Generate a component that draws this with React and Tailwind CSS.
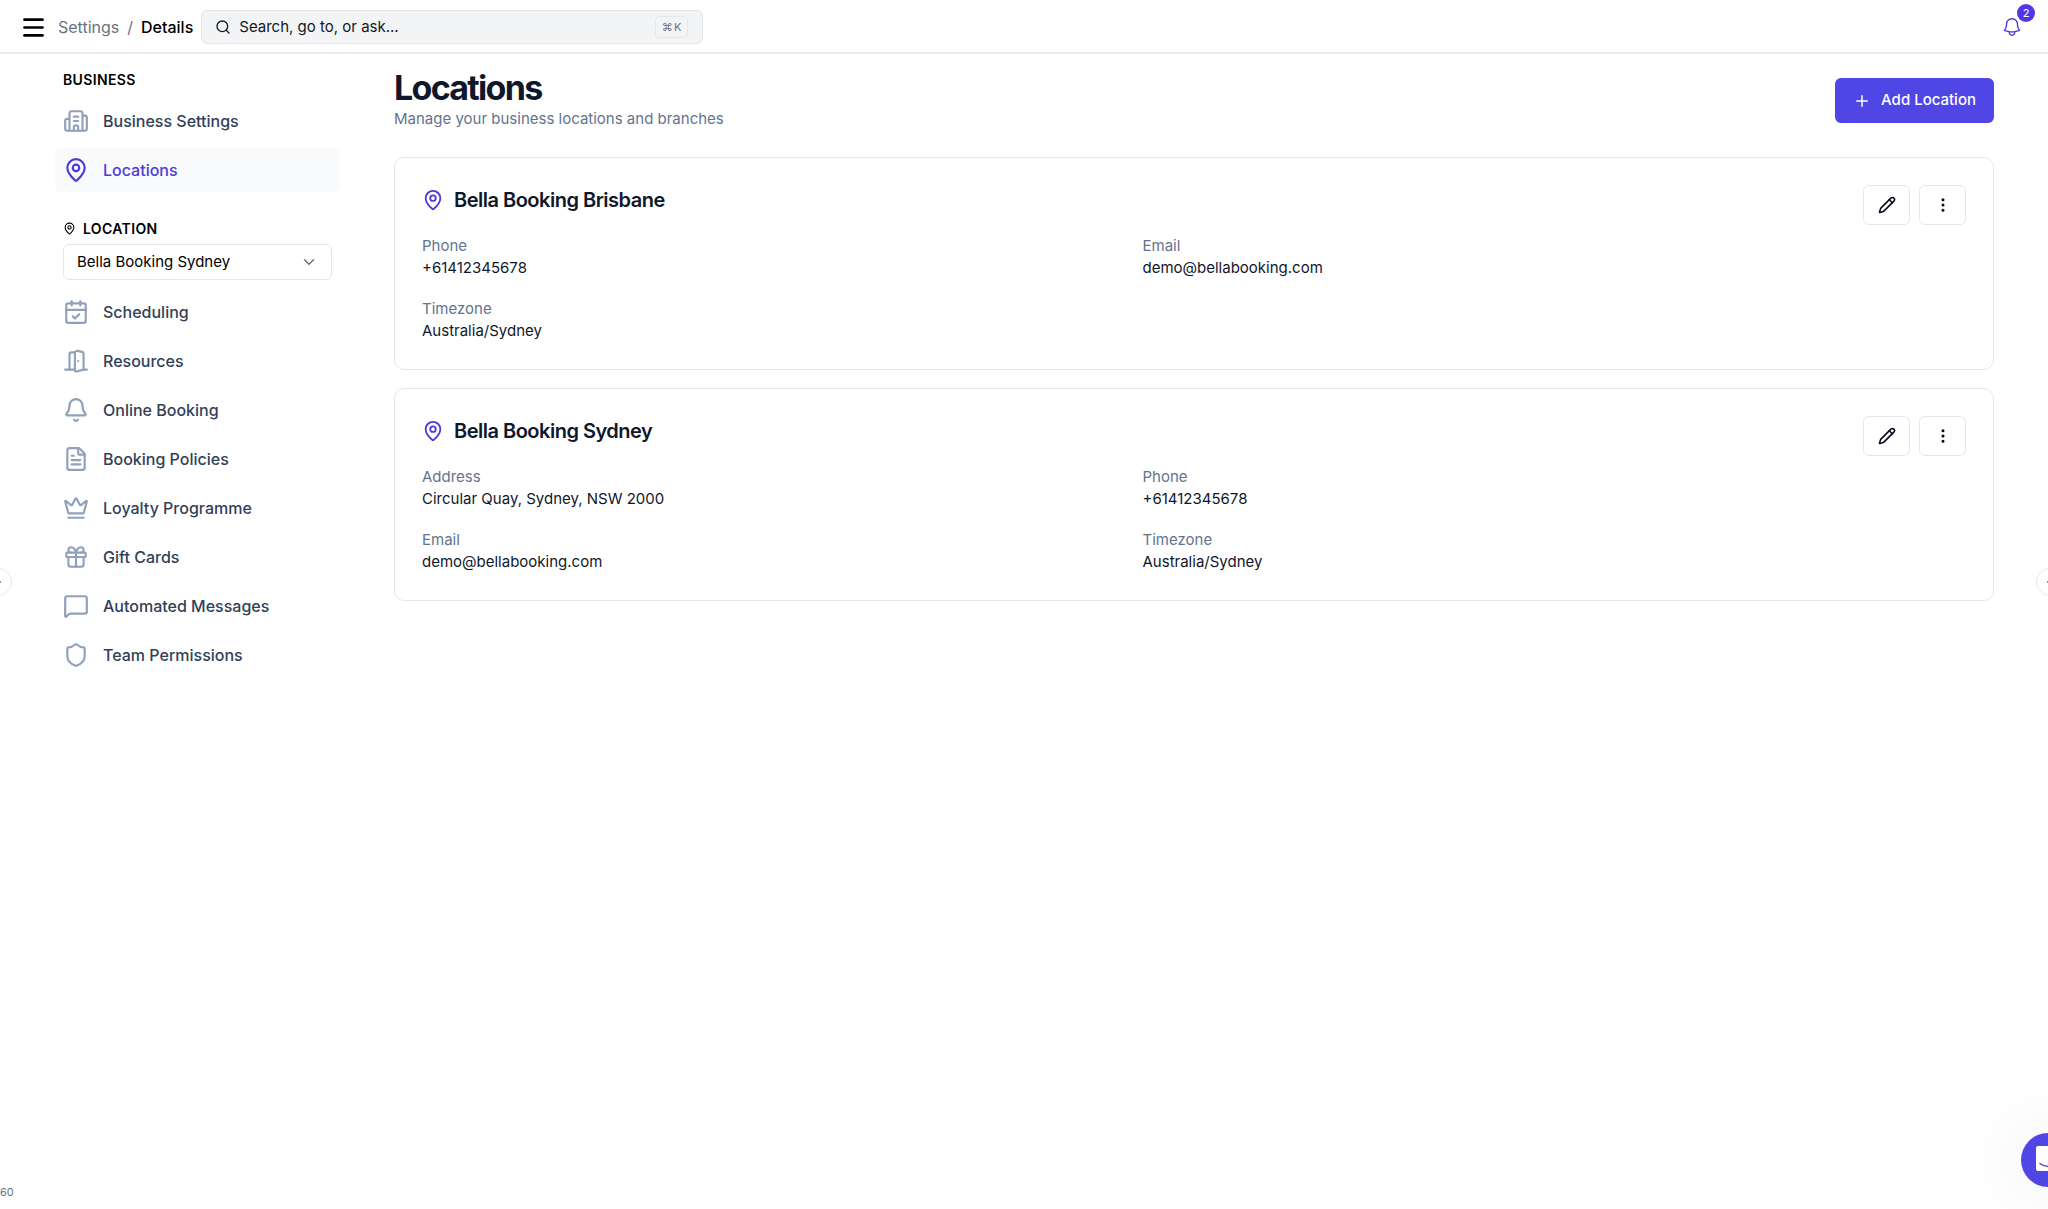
import { Menu, Search, MapPin, ChevronDown, CalendarCheck, Bell, FileText, Gift, MessageSquare, Shield, Pencil, EllipsisVertical, Plus, ChevronRight, ChevronLeft } from "lucide-react";

function Icon({ children, size = 26, stroke = 2 }) {
  return (
    <svg width={size} height={size} viewBox="0 0 24 24" fill="none" stroke="currentColor" strokeWidth={stroke} strokeLinecap="round" strokeLinejoin="round" aria-hidden="true" className="shrink-0">
      {children}
    </svg>
  );
}

const Building = () => (
  <Icon>
    <path d="M10 12h4" />
    <path d="M10 8h4" />
    <path d="M14 21v-3a2 2 0 0 0-4 0v3" />
    <path d="M6 10H4a2 2 0 0 0-2 2v7a2 2 0 0 0 2 2h16a2 2 0 0 0 2-2V9a2 2 0 0 0-2-2h-2" />
    <path d="M6 21V5a2 2 0 0 1 2-2h8a2 2 0 0 1 2 2v16" />
  </Icon>
);

const Door = () => (
  <Icon>
    <path d="M11 20H2" />
    <path d="M11 4.562v16.157a1 1 0 0 0 1.242.97L19 20V5.562a2 2 0 0 0-1.515-1.94l-4-1A2 2 0 0 0 11 4.561z" />
    <path d="M11 4H8a2 2 0 0 0-2 2v14" />
    <path d="M14 12h.01" />
    <path d="M22 20h-3" />
  </Icon>
);

const Crown = () => (
  <Icon>
    <path d="M11.562 3.266a.5.5 0 0 1 .876 0L15.390 8.870a1 1 0 0 0 1.516.294L21.183 5.500a.5.5 0 0 1 .798.519l-2.834 10.246a1 1 0 0 1-.956.734H5.810a1 1 0 0 1-.957-.734L2.020 6.020a.5.5 0 0 1 .798-.519l4.276 3.664a1 1 0 0 0 1.516-.294z" />
    <path d="M5 21h14" />
  </Icon>
);

const lucide = (C) => () => <C size={26} className="shrink-0" aria-hidden="true" />;

const businessItems = [
  { label: "Business Settings", icon: Building },
  { label: "Locations", icon: lucide(MapPin), active: true },
];

const locationItems = [
  { label: "Scheduling", icon: lucide(CalendarCheck) },
  { label: "Resources", icon: Door },
  { label: "Online Booking", icon: lucide(Bell) },
  { label: "Booking Policies", icon: lucide(FileText) },
  { label: "Loyalty Programme", icon: Crown },
  { label: "Gift Cards", icon: lucide(Gift) },
  { label: "Automated Messages", icon: lucide(MessageSquare) },
  { label: "Team Permissions", icon: lucide(Shield) },
];

const locations = [
  {
    name: "Bella Booking Brisbane",
    fields: [["Phone", "+61412345678"], ["Email", "demo@bellabooking.com"], ["Timezone", "Australia/Sydney"]],
  },
  {
    name: "Bella Booking Sydney",
    fields: [["Address", "Circular Quay, Sydney, NSW 2000"], ["Phone", "+61412345678"], ["Email", "demo@bellabooking.com"], ["Timezone", "Australia/Sydney"]],
  },
];

function NavList({ items }) {
  return (
    <ul className="flex flex-col gap-[5px]">
      {items.map(({ label, icon: I, active }) => (
        <li key={label}>
          <a
            href="#"
            aria-current={active ? "page" : undefined}
            className={
              active
                ? "flex h-11 items-center gap-[14px] rounded-md bg-slate-50 px-2 text-base font-medium text-[#4f39d8]"
                : "flex h-11 items-center gap-[14px] rounded-md px-2 text-base font-medium text-slate-700"
            }
          >
            <span className={active ? "text-[#4f39d8]" : "text-slate-400"}><I /></span>
            {label}
          </a>
        </li>
      ))}
    </ul>
  );
}

function LocationCard({ name, fields }) {
  return (
    <article className="flex gap-[18px] rounded-[10px] border border-gray-200 p-[27px]">
      <div className="flex-1">
        <h2 className="flex h-[30px] items-center gap-[10px] text-[20px] font-semibold tracking-tight text-slate-900">
          <MapPin size={22} className="text-[#4f39d8]" aria-hidden="true" />
          {name}
        </h2>
        <dl className="mt-5 grid grid-cols-2 gap-x-[18px] gap-y-[19px]">
          {fields.map(([k, v]) => (
            <div key={k} className="leading-[22px]">
              <dt className="text-slate-500">{k}</dt>
              <dd className="text-slate-900">{v}</dd>
            </div>
          ))}
        </dl>
      </div>
      <div className="flex items-start gap-[9px]">
        <button type="button" aria-label={`Edit ${name}`} className="flex h-10 w-[47px] items-center justify-center rounded-md border border-gray-200 text-slate-950">
          <Pencil size={18} />
        </button>
        <button type="button" aria-label={`More actions for ${name}`} className="flex h-10 w-[47px] items-center justify-center rounded-md border border-gray-200 text-slate-950">
          <EllipsisVertical size={18} />
        </button>
      </div>
    </article>
  );
}

export default function App() {
  return (
    <div className="relative min-h-screen overflow-hidden bg-white font-[Inter,sans-serif] text-[15px] text-slate-900">
      <header className="flex h-[54px] items-center border-b-2 border-[#ebebed] pl-[20px] pr-[25px] pt-[2px]">
        <button type="button" aria-label="Menu" className="text-black"><Menu size={27} strokeWidth={2.4} /></button>
        <nav aria-label="Breadcrumb" className="ml-[11px] flex gap-2 text-base">
          <a href="#" className="text-gray-500">Settings</a>
          <span className="text-gray-500">/</span>
          <span className="font-medium text-black">Details</span>
        </nav>
        <label className="ml-2 flex h-[34px] w-[502px] items-center gap-2 rounded-md border border-gray-200 bg-gray-100 pl-[13px] pr-[14px]">
          <Search size={16} className="text-gray-900" aria-hidden="true" />
          <input type="text" aria-label="Search" placeholder="Search, go to, or ask..." className="min-w-0 flex-1 bg-transparent outline-none placeholder:text-gray-900" />
          <kbd className="flex h-[22px] items-center gap-px rounded border border-gray-200 px-[6px] font-[Inter,sans-serif] text-[11px] text-gray-500">⌘<span>K</span></kbd>
        </label>
        <button type="button" aria-label="Notifications, 2 unread" className="relative ml-auto text-[#4f39d8]">
          <Icon size={22} stroke={1.5}>
            <path d="M14.857 17.082a23.848 23.848 0 0 0 5.454-1.31A8.967 8.967 0 0 1 18 9.75V9A6 6 0 0 0 6 9v.75a8.967 8.967 0 0 1-2.312 6.022c1.733.64 3.56 1.085 5.455 1.31m5.714 0a24.255 24.255 0 0 1-5.714 0m5.714 0a3 3 0 1 1-5.714 0" />
          </Icon>
          <span className="absolute -right-3 -top-3 flex size-[18px] items-center justify-center rounded-full bg-[#4f39e5] text-[11px] text-white">2</span>
        </button>
      </header>

      <div className="flex">
        <aside className="w-[340px] shrink-0 pl-[55px]">
          <h2 className="mt-[15px] pl-2 text-[14px] font-semibold uppercase leading-[22px] tracking-wide text-black">Business</h2>
          <div className="mt-2"><NavList items={businessItems} /></div>
          <label htmlFor="location" className="mt-[25px] flex h-[22px] items-center gap-[7px] pl-2 text-[14px] font-semibold uppercase tracking-wide text-black">
            <MapPin size={13} aria-hidden="true" />
            Location
          </label>
          <div className="relative mx-2 mb-[10px] mt-[5px]">
            <select id="location" defaultValue="Bella Booking Sydney" className="h-9 w-full appearance-none rounded-md border border-gray-200 bg-white pl-[13px] pr-10 text-black">
              <option>Bella Booking Sydney</option>
              <option>Bella Booking Brisbane</option>
            </select>
            <ChevronDown size={18} className="pointer-events-none absolute right-[14px] top-[9px] text-gray-500" aria-hidden="true" />
          </div>
          <NavList items={locationItems} />
        </aside>

        <main className="min-w-0 flex-1 px-[54px] pt-4">
          <div className="flex items-start justify-between">
            <div>
              <h1 className="text-[34px] font-bold leading-[36px] tracking-tighter text-slate-900">Locations</h1>
              <p className="leading-[26px] text-slate-500">Manage your business locations and branches</p>
            </div>
            <button type="button" className="mt-2 flex h-[45px] items-center gap-[10px] rounded-md bg-[#4f46e5] px-[18px] font-medium text-white">
              <Plus size={18} aria-hidden="true" />
              Add Location
            </button>
          </div>
          <div className="mt-[25px] flex flex-col gap-[18px]">
            {locations.map((l) => <LocationCard key={l.name} {...l} />)}
          </div>
        </main>
      </div>

      <button type="button" aria-label="Expand left panel" className="absolute -left-4 top-[568px] flex size-7 items-center justify-center rounded-full border border-gray-200 bg-white text-black">
        <ChevronRight size={16} />
      </button>
      <button type="button" aria-label="Expand right panel" className="absolute -right-4 top-[568px] flex size-7 items-center justify-center rounded-full border border-gray-200 bg-white text-black">
        <ChevronLeft size={16} />
      </button>
      <span className="absolute bottom-[9px] left-0 text-[11px] leading-4 text-gray-500">60</span>
      <button type="button" aria-label="Open chat" className="absolute -right-[27px] bottom-[22px] flex size-[54px] items-center justify-center rounded-full bg-[#4f46e5] shadow-[0_0_80px_rgba(0,0,0,0.1)]">
        <svg width="25" height="28" viewBox="0 0 25 28" aria-hidden="true">
          <path d="M2 0h21a2 2 0 0 1 2 2v26l-6-3H2a2 2 0 0 1-2-2V2a2 2 0 0 1 2-2Z" fill="white" />
          <path d="M4 17.500c5 4 12 4 17 0" fill="none" stroke="#4f46e5" strokeWidth="1.600" strokeLinecap="round" />
        </svg>
      </button>
    </div>
  );
}
